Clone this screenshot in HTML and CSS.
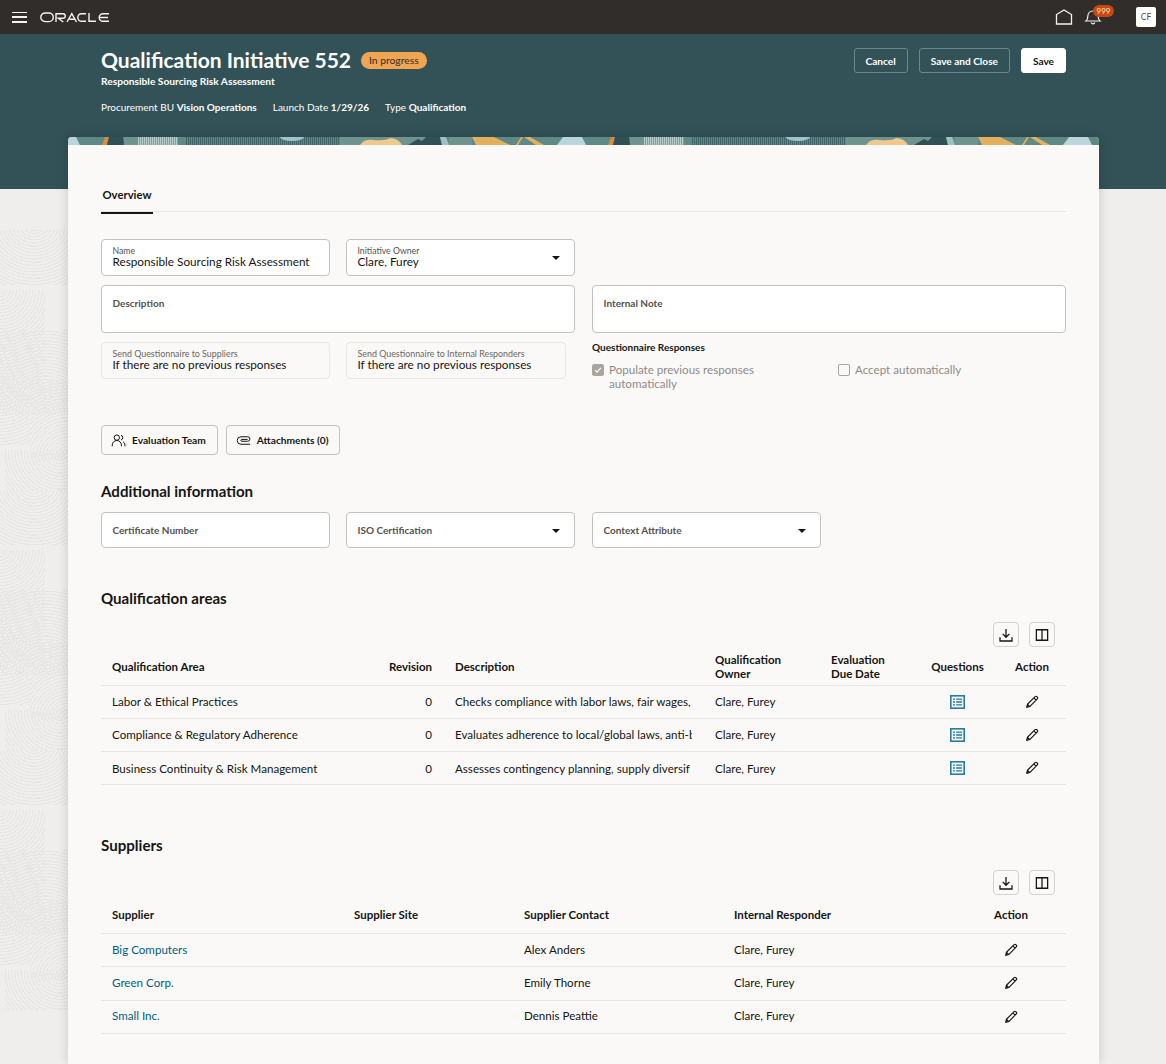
FILE: index.html
```html
<!DOCTYPE html>
<html lang="en">
<head>
  <meta charset="UTF-8">
  <title>Qualification Initiative 552</title>
  <link rel="stylesheet" href="styles.css">
</head>
<body>
  <svg class="sprites" width="0" height="0">
    <symbol id="i-edit" viewBox="0 0 24 24"><path d="M4 20l1.200-4.600L16.600 4a1.800 1.800 0 0 1 2.500 0l.9.9a1.800 1.800 0 0 1 0 2.500L8.600 18.800 4 20zM14.800 5.800l3.400 3.400M5.200 15.400l3.400 3.400" fill="none" stroke="#161513" stroke-width="1.700" stroke-linejoin="round"/></symbol>
    <symbol id="i-list" viewBox="0 0 15 14"><rect x=".8" y=".8" width="13.400" height="12.400" fill="#f2f7f9" stroke="#2a7ba0" stroke-width="1.600"/><path d="M3 4.200h2M6.200 4.200H12M3 7h2M6.200 7H12M3 9.800h2M6.200 9.800H12" stroke="#2a7ba0" stroke-width="1.300"/></symbol>
    <symbol id="i-down" viewBox="0 0 24 24"><path d="M12 4v11M7.500 10.500L12 15l4.500-4.500M4 15v5h16v-5" fill="none" stroke="#161513" stroke-width="1.700"/></symbol>
    <symbol id="i-cols" viewBox="0 0 24 24"><path d="M4.500 5h15v14h-15zM12 5v14" fill="none" stroke="#161513" stroke-width="1.700"/></symbol>
    <symbol id="i-art" viewBox="0 0 506 8" preserveAspectRatio="none">
      <rect width="506" height="8" fill="#5f8985"/>
      <polygon points="-19,8 -13,0 8,0 12,8" fill="#bad5db"/>
      <polygon points="489,8 495,0 516,0 522,8" fill="#bad5db"/>
      <polygon points="34,8 37,0 41,0 39,8" fill="#dd8a3f"/>
      <polygon points="39,8 41,0 55,0 56,8" fill="#2f5054"/>
      <rect x="56" width="14" height="8" fill="#6f938e"/>
      <rect x="70" width="40" height="8" fill="url(#hatch-light)"/>
      <rect x="118" width="154" height="8" fill="url(#hatch-dark)"/>
      <ellipse cx="224" cy="0" rx="12" ry="4" fill="#9cc4ca"/>
      <rect x="272" width="100" height="8" fill="#6f938e"/>
      <path d="M292 8Q296 2 305 3Q318 4 322 1Q330 1 334 8z" fill="#efc98c"/>
      <polygon points="340,8 350,2 354,4 358,0 372,0 374,8" fill="#2f5054"/>
      <polygon points="374,8 372,0 378,0 381,8" fill="#a0c0c3"/>
      <rect x="381" width="23" height="8" fill="#6f938e"/>
      <polygon points="404,0 426,0 442,8 408,8" fill="#e3b05e"/>
      <rect x="442" width="47" height="8" fill="#5f8985"/>
      <polygon points="448,8 453,0 455,0 450,8" fill="#e3b05e"/>
      <polygon points="456,0 462,0 476,8 468,8" fill="#e3b05e"/>
    </symbol>
  </svg>

  <header class="topbar">
    <button class="burger" aria-label="Menu"><span></span><span></span><span></span></button>
    <svg class="logo" viewBox="0 0 70 11" aria-label="ORACLE logo" role="img"><g fill="none" stroke="#f5f4f2" stroke-width="1.400"><rect x=".8" y="1" width="12.500" height="8.600" rx="4.300"/><path d="M16 10V1.700h7a2.200 2.200 0 0 1 0 4.600h-4.700l5 3.700"/><path d="M27 10l4.800-8.300L36.500 10M29.500 7.300h5"/><path d="M46 1.700h-4.400a3.600 3.600 0 0 0 0 7.600H46"/><path d="M49 1v8.300h7"/><path d="M69 1.700h-6a3.600 3.600 0 0 0 0 7.600h6M59.500 5.500H68"/></g></svg>
    <div class="topbar-right">
      <svg class="home" viewBox="0 0 18 18"><path d="M1.500 16V6.500L9 2l7.500 4.500V16z" fill="none" stroke="#f5f4f2" stroke-width="1.300"/></svg>
      <div class="bell">
        <svg viewBox="0 0 18 18"><path d="M2 13c1.300-1 1.800-2.200 1.800-4.500 0-3 2-5.500 5.200-5.500s5.200 2.500 5.200 5.500c0 2.300.5 3.500 1.800 4.500zM7.200 14.500a1.900 1.900 0 0 0 3.600 0" fill="none" stroke="#f5f4f2" stroke-width="1.200"/></svg>
        <span class="bell-count">999</span>
      </div>
      <span class="avatar">CF</span>
    </div>
  </header>

  <section class="hero">
    <div class="hero-inner">
      <div>
        <div class="title-row">
          <h1>Qualification Initiative 552</h1>
          <span class="status">In progress</span>
        </div>
        <p class="subtitle">Responsible Sourcing Risk Assessment</p>
        <p class="meta">
          <span>Procurement BU <b>Vision Operations</b></span>
          <span>Launch Date <b>1/29/26</b></span>
          <span>Type <b>Qualification</b></span>
        </p>
      </div>
      <div class="hero-actions">
        <button class="btn-ghost">Cancel</button>
        <button class="btn-ghost">Save and Close</button>
        <button class="btn-white">Save</button>
      </div>
    </div>
  </section>

  <div class="backdrop" aria-hidden="true">
    <div class="tile"></div>
    <div class="tile"></div>
    <div class="tile tile-low"></div>
  </div>

  <main class="card">
    <svg class="banner-strip" viewBox="0 0 1031 8" aria-hidden="true">
      <defs>
        <pattern id="hatch-light" width="2" height="8" patternUnits="userSpaceOnUse"><rect width="2" height="8" fill="#7f9f9e"/><rect width="1" height="8" fill="#b5cccc"/></pattern>
        <pattern id="hatch-dark" width="2" height="8" patternUnits="userSpaceOnUse"><rect width="2" height="8" fill="#5f8985"/><rect width="1" height="8" fill="#3f6568"/></pattern>
      </defs>
      <use href="#i-art" x="0" width="506" height="8"/>
      <use href="#i-art" x="506" width="506" height="8"/>
      <use href="#i-art" x="1012" width="506" height="8"/>
    </svg>
    <div class="card-body">
      <nav class="tabs"><span class="tab">Overview</span></nav>

      <div class="form-grid">
        <div class="field"><label>Name</label><span>Responsible Sourcing Risk Assessment</span></div>
        <div class="field field-select"><label>Initiative Owner</label><span>Clare, Furey</span><i class="caret"></i></div>
      </div>

      <div class="notes">
        <div class="field field-tall"><label>Description</label></div>
        <div class="field field-tall"><label>Internal Note</label></div>
      </div>

      <div class="send-row">
        <div class="field field-read"><label>Send Questionnaire to Suppliers</label><span>If there are no previous responses</span></div>
        <div class="field field-read field-read-short"><label>Send Questionnaire to Internal Responders</label><span>If there are no previous responses</span></div>
        <div class="responses">
          <h4>Questionnaire Responses</h4>
          <div class="checks">
            <div class="check"><i class="box box-on"><svg viewBox="0 0 12 12"><path d="M2.500 6.200l2.300 2.300 4.700-5" fill="none" stroke="#fff" stroke-width="1.400"/></svg></i><span>Populate previous responses automatically</span></div>
            <div class="check"><i class="box"></i><span>Accept automatically</span></div>
          </div>
        </div>
      </div>

      <div class="tool-row">
        <button class="btn-tool">
          <svg viewBox="0 0 18 18"><circle cx="7" cy="5.500" r="3.200"/><path d="M1.500 16v-1.500a5.500 5.500 0 0 1 11 0V16M12 2.500a3.200 3.200 0 0 1 0 6M14.500 10.500c1.500 1 2.200 2.300 2.200 4V16"/></svg>
          Evaluation Team
        </button>
        <button class="btn-tool">
          <svg viewBox="0 0 18 18"><path d="M17 13.500H6a4.500 4.500 0 0 1 0-9h8a2.700 2.700 0 0 1 0 5.400H7a1.100 1.100 0 0 1 0-2.200h7"/></svg>
          Attachments (0)
        </button>
      </div>

      <h2 class="section-title section-info">Additional information</h2>
      <div class="form-grid info-grid">
        <div class="field field-plain"><label>Certificate Number</label></div>
        <div class="field field-plain field-select"><label>ISO Certification</label><i class="caret"></i></div>
        <div class="field field-plain field-select"><label>Context Attribute</label><i class="caret"></i></div>
      </div>

      <h2 class="section-title section-areas">Qualification areas</h2>
      <div class="table-tools">
        <button class="btn-icon"><svg><use href="#i-down"/></svg></button>
        <button class="btn-icon"><svg><use href="#i-cols"/></svg></button>
      </div>
      <table class="data areas">
        <colgroup>
          <col class="c-area"><col class="c-rev"><col class="c-desc"><col class="c-owner"><col class="c-due"><col class="c-q"><col class="c-act">
        </colgroup>
        <thead>
          <tr>
            <th>Qualification Area</th><th class="num">Revision</th><th>Description</th><th>Qualification Owner</th><th>Evaluation Due Date</th><th class="mid">Questions</th><th class="mid">Action</th>
          </tr>
        </thead>
        <tbody>
          <tr>
            <td>Labor &amp; Ethical Practices</td><td class="num">0</td><td><div class="clip">Checks compliance with labor laws, fair wages,</div></td><td>Clare, Furey</td><td></td>
            <td class="mid"><svg class="ico-list"><use href="#i-list"/></svg></td><td class="mid"><svg class="ico-edit"><use href="#i-edit"/></svg></td>
          </tr>
          <tr>
            <td>Compliance &amp; Regulatory Adherence</td><td class="num">0</td><td><div class="clip">Evaluates adherence to local/global laws, anti-b</div></td><td>Clare, Furey</td><td></td>
            <td class="mid"><svg class="ico-list"><use href="#i-list"/></svg></td><td class="mid"><svg class="ico-edit"><use href="#i-edit"/></svg></td>
          </tr>
          <tr>
            <td>Business Continuity &amp; Risk Management</td><td class="num">0</td><td><div class="clip">Assesses contingency planning, supply diversif</div></td><td>Clare, Furey</td><td></td>
            <td class="mid"><svg class="ico-list"><use href="#i-list"/></svg></td><td class="mid"><svg class="ico-edit"><use href="#i-edit"/></svg></td>
          </tr>
        </tbody>
      </table>

      <h2 class="section-title section-suppliers">Suppliers</h2>
      <div class="table-tools">
        <button class="btn-icon"><svg><use href="#i-down"/></svg></button>
        <button class="btn-icon"><svg><use href="#i-cols"/></svg></button>
      </div>
      <table class="data suppliers">
        <colgroup>
          <col class="s-name"><col class="s-site"><col class="s-contact"><col class="s-resp"><col class="s-act">
        </colgroup>
        <thead>
          <tr><th>Supplier</th><th>Supplier Site</th><th>Supplier Contact</th><th>Internal Responder</th><th class="mid">Action</th></tr>
        </thead>
        <tbody>
          <tr><td><a href="#">Big Computers</a></td><td></td><td>Alex Anders</td><td>Clare, Furey</td><td class="mid"><svg class="ico-edit"><use href="#i-edit"/></svg></td></tr>
          <tr><td><a href="#">Green Corp.</a></td><td></td><td>Emily Thorne</td><td>Clare, Furey</td><td class="mid"><svg class="ico-edit"><use href="#i-edit"/></svg></td></tr>
          <tr><td><a href="#">Small Inc.</a></td><td></td><td>Dennis Peattie</td><td>Clare, Furey</td><td class="mid"><svg class="ico-edit"><use href="#i-edit"/></svg></td></tr>
        </tbody>
      </table>
    </div>
  </main>
</body>
</html>
```

FILE: styles.css
```css
* {
  box-sizing: border-box;
}
body {
  margin: 0;
  height: 1064px;
  overflow: hidden;
  position: relative;
  background: #efeeec;
  font-family: "Lato", "Noto Sans", sans-serif;
  color: #161513;
  font-size: 13px;
}
button {
  font-family: inherit;
  cursor: pointer;
}
.sprites {
  position: absolute;
}

/* top bar */
.topbar {
  height: 34px;
  background: #312d2a;
  display: flex;
  align-items: center;
  padding: 0 10px 0 12px;
}
.burger {
  width: 15px;
  height: 11px;
  padding: 0;
  border: none;
  background: none;
  display: flex;
  flex-direction: column;
  justify-content: space-between;
}
.burger span {
  display: block;
  width: 15px;
  height: 1.5px;
  background: #f5f4f2;
}
.logo {
  width: 70px;
  height: 11px;
  margin-left: 13px;
}
.topbar-right {
  margin-left: auto;
  display: flex;
  align-items: center;
}
.home {
  width: 18px;
  height: 18px;
}
.bell {
  position: relative;
  width: 18px;
  height: 18px;
  margin-left: 11px;
}
.bell svg {
  display: block;
  width: 18px;
  height: 18px;
}
.bell-count {
  position: absolute;
  left: 9px;
  top: -3px;
  width: 21px;
  height: 12px;
  border-radius: 6px;
  background: #c8470f;
  color: #fbe6c8;
  font-size: 8px;
  line-height: 12px;
  text-align: center;
}
.avatar {
  width: 20px;
  height: 20px;
  margin-left: 34px;
  border-radius: 2px;
  background: #fff;
  color: #55514d;
  font-size: 8.500px;
  line-height: 20px;
  text-align: center;
}

/* hero */
.hero {
  height: 155px;
  background: #325257;
  color: #fff;
}
.hero-inner {
  display: flex;
  justify-content: space-between;
  padding: 12px 100px 0 101px;
}
.title-row {
  display: flex;
  align-items: center;
  gap: 10px;
}
h1 {
  margin: 0;
  font-size: 21px;
  line-height: 28px;
  font-weight: 700;
}
.status {
  height: 17px;
  padding: 0 8px;
  border-radius: 9px;
  background: #efa552;
  color: #312d2a;
  font-size: 10.300px;
  line-height: 17px;
}
.subtitle {
  margin: 0;
  font-size: 10.200px;
  line-height: 14px;
  font-weight: 700;
}
.meta {
  margin: 12px 0 0;
  display: flex;
  gap: 16px;
  font-size: 10px;
  line-height: 14px;
}
.meta b {
  font-weight: 700;
}
.hero-actions {
  display: flex;
  gap: 11px;
  align-items: flex-start;
  margin-top: 2px;
}
.btn-ghost, .btn-white {
  height: 25px;
  border-radius: 3px;
  font-size: 10.100px;
  font-weight: 700;
  padding: 0 11px;
}
.btn-ghost {
  background: none;
  border: 1px solid #6b888b;
  color: #fff;
}
.btn-white {
  background: #fff;
  border: 1px solid #fff;
  color: #161513;
}

/* backdrop patterns */
.backdrop {
  position: absolute;
  left: 0;
  top: 189px;
  width: 68px;
  height: 875px;
  padding-top: 41px;
  overflow: hidden;
  display: flex;
  flex-direction: column;
}
.tile {
  flex: none;
  height: 260px;
  --line: #e7e6e4 0 1.2px, transparent 1.2px 3.2px;
  background-repeat: no-repeat;
  background-image:
    repeating-radial-gradient(circle at 34px -10px, var(--line)),
    repeating-radial-gradient(circle at 0 0, var(--line)),
    repeating-radial-gradient(circle at 45px 85px, var(--line)),
    repeating-radial-gradient(circle at 0 0, var(--line)),
    repeating-radial-gradient(circle at 38px 80px, var(--line)),
    repeating-radial-gradient(circle at 55px 0, var(--line));
  background-size: 68px 55px, 45px 90px, 68px 85px, 30px 65px, 38px 80px, 63px 40px;
  background-position: 0 0, 0 60px, 0 100px, 0 150px, 30px 150px, 5px 220px;
}
.tile-low {
  margin-top: 0;
}

/* card */
.card {
  position: absolute;
  left: 68px;
  top: 137px;
  width: 1031px;
  height: 927px;
  border-radius: 4px 4px 0 0;
  background: #faf9f7;
  box-shadow: 0 0 12px rgba(0, 0, 0, .16);
  overflow: hidden;
}
.banner-strip {
  display: block;
  width: 1031px;
  height: 8px;
}
.card-body {
  padding: 41px 33px 0;
}

/* tabs */
.tabs {
  height: 26px;
  border-bottom: 1px solid #e8e6e3;
}
.tab {
  display: inline-block;
  height: 26px;
  padding: 0 1.500px;
  border-bottom: 2px solid #161513;
  font-size: 11.300px;
  font-weight: 700;
  line-height: 14px;
}

/* fields */
.form-grid {
  display: grid;
  grid-template-columns: 229px 229px 230px;
  gap: 16px;
  margin-top: 27px;
}
.form-grid > .field:nth-child(3) {
  margin-left: 1px;
}
.field {
  position: relative;
  height: 37px;
  padding: 6px 10.500px 0;
  background: #fff;
  border: 1px solid #c4c2bf;
  border-radius: 4px;
}
.field label {
  display: block;
  font-size: 8.700px;
  line-height: 9px;
  color: #55514d;
}
.field span {
  display: block;
  font-size: 11.750px;
  line-height: 14px;
  white-space: nowrap;
}
.field-select {
  padding-right: 30px;
}
.caret {
  position: absolute;
  right: 14px;
  top: 16px;
  border-style: solid;
  border-width: 4px 4px 0;
  border-color: #161513 transparent transparent;
}
.notes {
  display: grid;
  grid-template-columns: 474px 474px;
  gap: 17px;
  margin-top: 9px;
}
.field-tall {
  height: 48px;
  padding-top: 11px;
}
.field-tall label {
  font-size: 10px;
  line-height: 12px;
  font-weight: 700;
}
.send-row {
  display: flex;
  margin-top: 9px;
}
.field-read {
  flex: none;
  width: 229px;
  margin-right: 16px;
  background: #faf9f7;
  border-color: #e8e6e3;
}
.field-read label {
  font-size: 8.900px;
  color: #6b6762;
}
.field-read-short {
  width: 220px;
  margin-right: 26px;
}
.responses {
  flex: 1;
}
.responses h4 {
  margin: 0;
  font-size: 10px;
  line-height: 11px;
  font-weight: 700;
}
.checks {
  display: flex;
  margin-top: 10px;
}
.check {
  width: 246px;
  display: flex;
  gap: 5px;
  color: #8f8b87;
  font-size: 11.600px;
  line-height: 14px;
}
.check span {
  width: 180px;
}
.box {
  flex: none;
  width: 12px;
  height: 12px;
  margin-top: 1px;
  border: 1px solid #a9a6a2;
  border-radius: 2px;
}
.box-on {
  background: #a9a6a2;
}
.box svg {
  display: block;
  width: 10px;
  height: 10px;
}

/* buttons under the form */
.tool-row {
  display: flex;
  gap: 8px;
  margin-top: 34px;
}
.btn-tool {
  height: 30px;
  padding: 0 11px 0 9px;
  display: flex;
  align-items: center;
  gap: 6px;
  background: #faf9f7;
  border: 1px solid #c4c2bf;
  border-radius: 4px;
  color: #161513;
  font-size: 10.200px;
  font-weight: 700;
}
.btn-tool svg {
  width: 15px;
  height: 15px;
  fill: none;
  stroke: #161513;
  stroke-width: 1.200;
}

/* sections */
.section-title {
  margin: 0;
  font-size: 15.100px;
  line-height: 18px;
  font-weight: 700;
}
.section-info {
  margin-top: 27px;
}
.info-grid {
  margin-top: 12px;
}
.field-plain {
  height: 36px;
  padding-top: 0;
  padding-bottom: 1px;
  display: flex;
  align-items: center;
}
.field-plain label {
  font-size: 10px;
  line-height: 12px;
  font-weight: 700;
}
.section-areas {
  margin-top: 41px;
}
.section-suppliers {
  margin-top: 51px;
}
.section-suppliers + .table-tools {
  margin-top: 16px;
}

/* tables */
.table-tools {
  display: flex;
  justify-content: flex-end;
  gap: 10px;
  padding-right: 11px;
  margin-top: 15px;
}
.btn-icon {
  width: 26px;
  height: 25px;
  padding: 0;
  background: #faf9f7;
  border: 1px solid #d4d2cf;
  border-radius: 4px;
}
.btn-icon svg {
  display: block;
  width: 18px;
  height: 18px;
  margin: auto;
}
table.data {
  width: 965px;
  table-layout: fixed;
  border-collapse: collapse;
  margin-top: 2px;
}
.data th {
  height: 36px;
  padding: 0 12px 0 11px;
  border-bottom: 1px solid #e8e6e3;
  font-size: 11.500px;
  line-height: 14px;
  font-weight: 700;
  text-align: left;
  vertical-align: middle;
}
.data td {
  height: 33.330px;
  padding: 0 12px 0 11px;
  border-bottom: 1px solid #e8e6e3;
  font-size: 11.600px;
  white-space: nowrap;
}
.suppliers td {
  padding-bottom: 2px;
}
.data .num {
  text-align: right;
}
.data .mid {
  padding: 0;
  text-align: center;
}
.clip {
  overflow: hidden;
}
.data a {
  color: #00607f;
  text-decoration: none;
}
.data svg {
  display: block;
  margin: auto;
}
.ico-edit {
  width: 16px;
  height: 16px;
}
.ico-list {
  width: 15px;
  height: 14px;
}
.c-area { width: 275px; }
.c-rev { width: 68px; }
.c-desc { width: 260px; }
.c-owner { width: 116px; }
.c-due { width: 97px; }
.c-q { width: 81px; }
.c-act { width: 68px; }
.s-name { width: 242px; }
.s-site { width: 170px; }
.s-contact { width: 210px; }
.s-resp { width: 233px; }
.s-act { width: 110px; }
```
